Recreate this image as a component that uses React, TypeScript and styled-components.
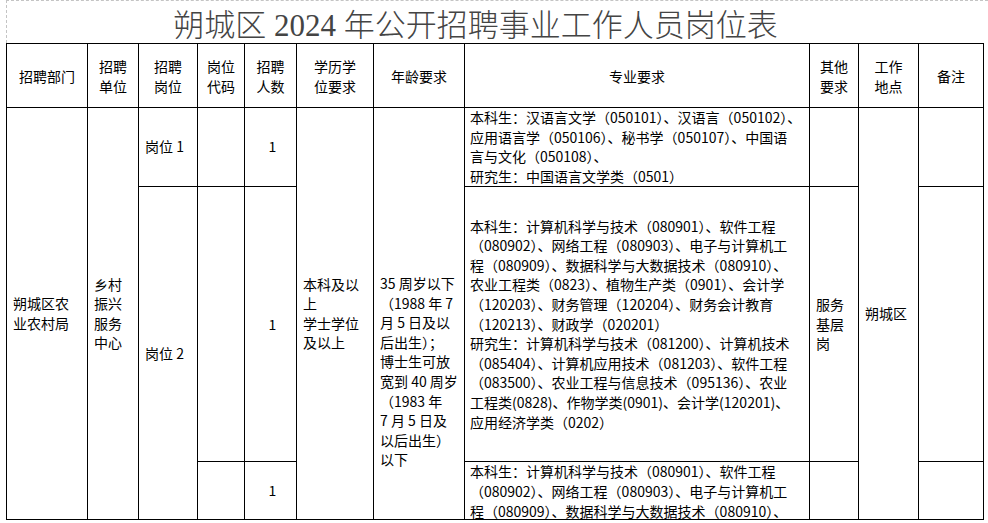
import React from "react";
import styled, { createGlobalStyle } from "styled-components";

const GlobalStyle = createGlobalStyle`
  html, body {
    margin: 0;
    padding: 0;
    background: #fff;
  }
  body {
    font-family: "Noto Sans CJK SC", "Liberation Sans", sans-serif;
    color: #000;
    overflow: hidden;
  }
`;

const Page = styled.div`
  width: 988px;
  height: 523px;
  padding-left: 6px;
  box-sizing: border-box;
`;

const TitleBar = styled.div`
  height: 43px;
  border-top: 1px dashed #c4c4c4;
  border-left: 1px dashed #c4c4c4;
  box-sizing: border-box;
  display: flex;
  align-items: center;
  justify-content: center;
  padding-right: 44px;
  font-family: "Liberation Serif", "Noto Sans CJK SC", serif;
  font-weight: 300;
  font-size: 31px;
  color: #444;
  white-space: nowrap;
`;

const Sheet = styled.table`
  width: 978px;
  border-collapse: collapse;
  table-layout: fixed;
  font-size: 14px;
  line-height: 19.6px;
`;

const HeadCell = styled.th`
  border: 1px solid #000;
  font-weight: normal;
  text-align: center;
  vertical-align: middle;
  padding: 0 2px;
  line-height: 20px;
`;

const Cell = styled.td<{ $align?: string; $valign?: string; $top?: number }>`
  border: 1px solid #000;
  text-align: ${(p) => p.$align || "left"};
  vertical-align: ${(p) => p.$valign || "middle"};
  padding: ${(p) => (p.$top ? `${p.$top}px 2px 0 6px` : "0 2px 0 6px")};
  white-space: nowrap;
  overflow: hidden;
`;

const Major = styled.td<{ $clip?: boolean }>`
  border: 1px solid #000;
  vertical-align: ${(p) => (p.$clip ? "top" : "middle")};
  padding: 0 0 0 5px;
  white-space: nowrap;
  overflow: hidden;
`;

const Clip = styled.div`
  height: 57px;
  overflow: hidden;
`;

const Line = styled.div``;

const cols = [81, 51, 59, 47, 52, 77, 91, 345, 49, 60, 65];

const headers = [
  ["招聘部门"],
  ["招聘", "单位"],
  ["招聘", "岗位"],
  ["岗位", "代码"],
  ["招聘", "人数"],
  ["学历学", "位要求"],
  ["年龄要求"],
  ["专业要求"],
  ["其他", "要求"],
  ["工作", "地点"],
  ["备注"],
];

const major1 = [
  "本科生：汉语言文学（050101）、汉语言（050102）、",
  "应用语言学（050106）、秘书学（050107）、中国语",
  "言与文化（050108）、",
  "研究生：中国语言文学类（0501）",
];

const major2 = [
  "本科生：计算机科学与技术（080901）、软件工程",
  "（080902）、网络工程（080903）、电子与计算机工",
  "程（080909）、数据科学与大数据技术（080910）、",
  "农业工程类（0823）、植物生产类（0901）、会计学",
  "（120203）、财务管理（120204）、财务会计教育",
  "（120213）、财政学（020201）",
  "研究生：计算机科学与技术（081200）、计算机技术",
  "（085404）、计算机应用技术（081203）、软件工程",
  "（083500）、农业工程与信息技术（095136）、农业",
  "工程类(0828)、作物学类(0901)、会计学(120201)、",
  "应用经济学类（0202）",
];

const major3 = [
  "本科生：计算机科学与技术（080901）、软件工程",
  "（080902）、网络工程（080903）、电子与计算机工",
  "程（080909）、数据科学与大数据技术（080910）、",
];

const age = [
  "35 周岁以下",
  "（1988 年 7",
  "月 5 日及以",
  "后出生）；",
  "博士生可放",
  "宽到 40 周岁",
  "（1983 年",
  " 7 月 5 日及",
  "以后出生）",
  "以下",
];

const lines = (items: string[]) =>
  items.map((t, i) => <Line key={i}>{t}</Line>);

export default function App() {
  return (
    <Page>
      <GlobalStyle />
      <TitleBar>朔城区 2024 年公开招聘事业工作人员岗位表</TitleBar>
      <Sheet>
        <colgroup>
          {cols.map((w, i) => (
            <col key={i} style={{ width: w }} />
          ))}
        </colgroup>
        <thead>
          <tr style={{ height: 64 }}>
            {headers.map((h, i) => (
              <HeadCell key={i}>{lines(h)}</HeadCell>
            ))}
          </tr>
        </thead>
        <tbody>
          <tr style={{ height: 79 }}>
            <Cell rowSpan={3}>{lines(["朔城区农", "业农村局"])}</Cell>
            <Cell rowSpan={3}>{lines(["乡村", "振兴", "服务", "中心"])}</Cell>
            <Cell>岗位 1</Cell>
            <Cell />
            <Cell $align="center">1</Cell>
            <Cell rowSpan={3}>
              {lines(["本科及以", "上", "学士学位", "及以上"])}
            </Cell>
            <Cell rowSpan={3} $valign="top" $top={166}>
              {lines(age)}
            </Cell>
            <Major>{lines(major1)}</Major>
            <Cell />
            <Cell rowSpan={3}>朔城区</Cell>
            <Cell />
          </tr>
          <tr style={{ height: 275 }}>
            <Cell rowSpan={2}>岗位 2</Cell>
            <Cell />
            <Cell $align="center">1</Cell>
            <Major>{lines(major2)}</Major>
            <Cell>{lines(["服务", "基层", "岗"])}</Cell>
            <Cell />
          </tr>
          <tr style={{ height: 58 }}>
            <Cell />
            <Cell $align="center">1</Cell>
            <Major $clip>
              <Clip>{lines(major3)}</Clip>
            </Major>
            <Cell />
            <Cell />
          </tr>
        </tbody>
      </Sheet>
    </Page>
  );
}
